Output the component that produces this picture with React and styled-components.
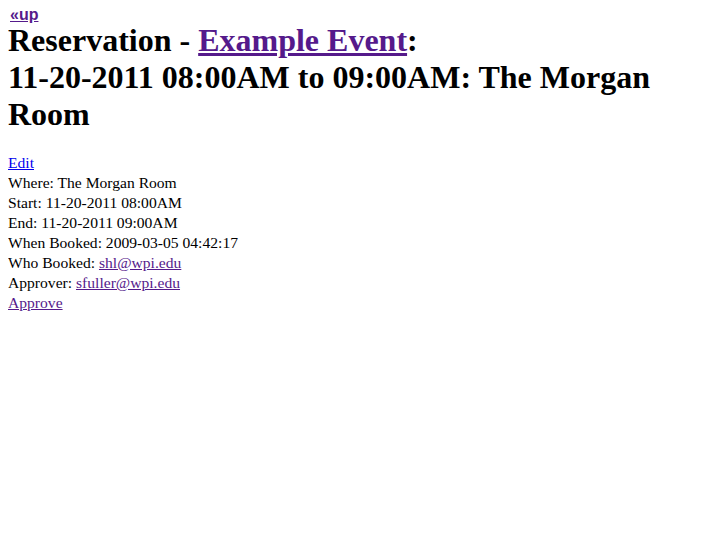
import React from "react";
import styled, { createGlobalStyle } from "styled-components";

const GlobalStyle = createGlobalStyle`
  body {
    margin: 8px;
    background: #fff;
    color: #000;
    font-family: "Liberation Serif", "Times New Roman", serif;
  }
`;

const UpLink = styled.a`
  display: block;
  font-family: "Liberation Sans", Arial, sans-serif;
  font-weight: bold;
  font-size: 16px;
  line-height: 14px;
  padding-left: 2px;
  color: #551a8b;
`;

const Title = styled.h1`
  margin: 0 0 20px;
  font-size: 32px;
  line-height: 37px;
  font-weight: bold;
  a {
    color: #551a8b;
  }
`;

const Details = styled.div`
  font-size: 15.6px;
  line-height: 20px;
`;

const Row = styled.div``;

const Link = styled.a`
  color: ${(p) => (p.$fresh ? "#0000ee" : "#551a8b")};
  text-decoration: underline;
`;

const App = () => {
  return (
    <>
      <GlobalStyle />
      <UpLink href="#">«up</UpLink>
      <Title>
        Reservation - <a href="#">Example Event</a>:<br />
        11-20-2011 08:00AM to 09:00AM: The Morgan Room
      </Title>
      <Details>
        <Row><Link $fresh href="#">Edit</Link></Row>
        <Row>Where: The Morgan Room</Row>
        <Row>Start: 11-20-2011 08:00AM</Row>
        <Row>End: 11-20-2011 09:00AM</Row>
        <Row>When Booked: 2009-03-05 04:42:17</Row>
        <Row>Who Booked: <Link href="#">shl@wpi.edu</Link></Row>
        <Row>Approver: <Link href="#">sfuller@wpi.edu</Link></Row>
        <Row><Link href="#">Approve</Link></Row>
      </Details>
    </>
  );
};

export default App;
